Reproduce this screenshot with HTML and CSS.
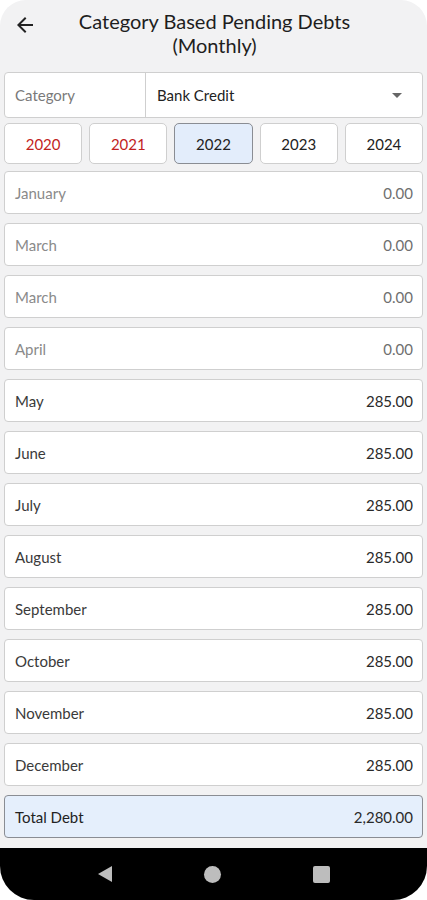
FILE: index.html
```html
<!DOCTYPE html>
<html>
<head>
    <title>Category Based Pending Debts</title>
    <link rel="stylesheet" href="styles.css">
</head>
<body>
    <div class="screen">
        <div class="header">
            <svg class="back" width="24" height="24" viewBox="0 0 24 24">
                <path d="M20 11H7.83l5.59-5.59L12 4l-8 8 8 8 1.41-1.41L7.83 13H20v-2z" fill="#222"/>
            </svg>
            <h1>Category Based Pending Debts<br>(Monthly)</h1>
        </div>

        <div class="content">
            <div class="category">
                <div class="category-label">Category</div>
                <div class="category-value">
                    <span>Bank Credit</span>
                    <span class="caret"></span>
                </div>
            </div>

            <div class="years">
                <div class="year red">2020</div>
                <div class="year red">2021</div>
                <div class="year selected">2022</div>
                <div class="year">2023</div>
                <div class="year">2024</div>
            </div>

            <div class="row empty"><span>January</span><span>0.00</span></div>
            <div class="row empty"><span>March</span><span>0.00</span></div>
            <div class="row empty"><span>March</span><span>0.00</span></div>
            <div class="row empty"><span>April</span><span>0.00</span></div>
            <div class="row"><span>May</span><span>285.00</span></div>
            <div class="row"><span>June</span><span>285.00</span></div>
            <div class="row"><span>July</span><span>285.00</span></div>
            <div class="row"><span>August</span><span>285.00</span></div>
            <div class="row"><span>September</span><span>285.00</span></div>
            <div class="row"><span>October</span><span>285.00</span></div>
            <div class="row"><span>November</span><span>285.00</span></div>
            <div class="row"><span>December</span><span>285.00</span></div>
            <div class="row total"><span>Total Debt</span><span>2,280.00</span></div>
        </div>

        <div class="navbar">
            <span class="nav-back"></span>
            <span class="nav-home"></span>
            <span class="nav-recent"></span>
        </div>
    </div>
</body>
</html>
```

FILE: styles.css
```css
body {
    margin: 0;
    background-color: #fff;
    font-family: Lato, "Open Sans", sans-serif;
    color: #222;
}

.screen {
    width: 427px;
    height: 900px;
    background-color: #f2f2f3;
    border-radius: 26px 26px 34px 34px;
    overflow: hidden;
    display: flex;
    flex-direction: column;
}

.header {
    position: relative;
    height: 66px;
    padding-top: 9px;
    box-sizing: border-box;
}

.back {
    position: absolute;
    left: 13px;
    top: 13px;
}

h1 {
    margin: 0;
    text-align: center;
    font-size: 20px;
    font-weight: 400;
    line-height: 24px;
    padding-left: 2px;
    color: #1e1e1e;
}

.content {
    flex: 1;
    padding: 6px 4px 0 4px;
    display: flex;
    flex-direction: column;
}

.category {
    height: 46px;
    display: flex;
    background-color: #fff;
    border: 1px solid #cfcfcf;
    border-radius: 4px;
    box-sizing: border-box;
    font-size: 15px;
}

.category-label {
    width: 141px;
    padding-left: 10px;
    box-sizing: border-box;
    display: flex;
    align-items: center;
    color: #7a7a7a;
    border-right: 1px solid #cfcfcf;
}

.category-value {
    flex: 1;
    display: flex;
    align-items: center;
    justify-content: space-between;
    padding: 0 20px 0 11px;
    color: #222;
}

.caret {
    width: 0;
    height: 0;
    border-left: 5px solid transparent;
    border-right: 5px solid transparent;
    border-top: 5px solid #666;
}

.years {
    display: flex;
    gap: 7px;
    margin-top: 5px;
    margin-bottom: 7px;
}

.year {
    flex: 1;
    height: 41px;
    display: flex;
    align-items: center;
    justify-content: center;
    background-color: #fff;
    border: 1px solid #cfcfcf;
    border-radius: 5px;
    box-sizing: border-box;
    font-size: 15px;
    color: #222;
}

.year.red {
    color: #c21f1f;
}

.year.selected {
    background-color: #e3edfb;
    border-color: #8a8d93;
}

.row {
    height: 43px;
    margin-bottom: 9px;
    display: flex;
    align-items: center;
    justify-content: space-between;
    padding: 0 9px 0 10px;
    background-color: #fff;
    border: 1px solid #cfcfcf;
    border-radius: 4px;
    box-sizing: border-box;
    font-size: 15px;
    color: #2a2a2a;
}

.row span:first-child {
    color: #3a3a3a;
}

.row.empty span:first-child {
    color: #8a8a8a;
}

.row.empty span:last-child {
    color: #6f6f6f;
}

.row.total {
    background-color: #e5effc;
    border-color: #8a8d93;
}

.row.total span:first-child {
    color: #222;
}

.navbar {
    height: 52px;
    background-color: #000;
    display: flex;
    align-items: center;
    justify-content: center;
}

.nav-back,
.nav-home,
.nav-recent {
    display: block;
    margin: 0 46px;
}

.nav-back {
    width: 0;
    height: 0;
    border-top: 8px solid transparent;
    border-bottom: 8px solid transparent;
    border-right: 14px solid #bdbdbd;
}

.nav-home {
    width: 17px;
    height: 17px;
    border-radius: 50%;
    background-color: #bdbdbd;
}

.nav-recent {
    width: 17px;
    height: 17px;
    border-radius: 2px;
    background-color: #bdbdbd;
}
```
